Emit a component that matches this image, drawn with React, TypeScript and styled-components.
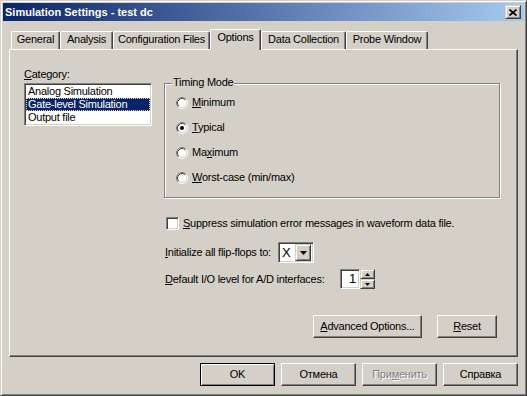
import React from "react";
import styled, { createGlobalStyle, css } from "styled-components";

const FACE = "#d4d0c8";
const SHADOW = "#808080";
const DARK = "#404040";
const HI = "#ffffff";
const NAVY = "#0a246a";
const FONT = `"Liberation Sans", Arial, sans-serif`;

const Global = createGlobalStyle`
  html, body { margin: 0; padding: 0; background: ${FACE}; }
  body { font-family: ${FONT}; font-size: 11px; color: #000; }
  * { box-sizing: border-box; }
  u { text-underline-offset: 1px; }
`;

const Window = styled.div`
  width: 527px;
  height: 396px;
  background: ${FACE};
  border: 1px solid;
  border-color: ${FACE} ${DARK} ${DARK} ${FACE};
  box-shadow: inset 1px 1px ${HI}, inset -1px -1px ${SHADOW};
  padding: 2px;
  display: flex;
  flex-direction: column;
  letter-spacing: -0.25px;
`;

const TitleBar = styled.div`
  height: 18px;
  flex: none;
  background: linear-gradient(to right, #0a246a, #a6caf0);
  display: flex;
  align-items: center;
  padding: 0 3px 0 2px;
`;

const TitleText = styled.span`
  color: #fff;
  font-weight: bold;
  font-size: 11px;
  line-height: 13px;
  letter-spacing: 0;
  white-space: nowrap;
`;

const CloseButton = styled.div`
  margin-left: auto;
  width: 16px;
  height: 14px;
  background: ${FACE};
  border: 1px solid;
  border-color: ${FACE} ${DARK} ${DARK} ${FACE};
  box-shadow: inset 1px 1px ${HI}, inset -1px -1px ${SHADOW};
  display: flex;
  align-items: center;
  justify-content: center;
`;

const Body = styled.div`
  padding: 0 6px;
  display: flex;
  flex-direction: column;
`;

const TabRow = styled.div`
  margin-top: 8px;
  height: 20px;
  display: flex;
  align-items: flex-end;
  padding-left: 2px;
`;

const Tab = styled.div<{ $w: number; $active?: boolean }>`
  width: ${(p) => p.$w}px;
  height: ${(p) => (p.$active ? 21 : 18)}px;
  margin-bottom: ${(p) => (p.$active ? -1 : 0)}px;
  background: ${FACE};
  border-top: 1px solid ${HI};
  border-left: 1px solid ${HI};
  border-right: 1px solid ${DARK};
  border-radius: 2px 2px 0 0;
  box-shadow: inset -1px 0 ${SHADOW};
  display: flex;
  justify-content: center;
  padding-top: 1px;
  line-height: 13px;
  white-space: nowrap;
  position: relative;
  z-index: ${(p) => (p.$active ? 2 : 1)};
`;

const Panel = styled.div`
  height: 308px;
  flex: none;
  border: 1px solid;
  border-color: ${HI} ${DARK} ${DARK} ${HI};
  box-shadow: inset -1px -1px ${SHADOW};
  padding: 18px 0 0 14px;
  display: grid;
  grid-template-columns: 128px 336px;
  column-gap: 12px;
  align-items: start;
`;

const Column = styled.div`
  display: flex;
  flex-direction: column;
`;

const Label = styled.div`
  line-height: 13px;
  white-space: nowrap;
`;

const sunken = css`
  border: 1px solid;
  border-color: ${SHADOW} ${HI} ${HI} ${SHADOW};
  box-shadow: inset 1px 1px ${DARK}, inset -1px -1px ${FACE};
  background: #fff;
`;

const raised = css`
  background: ${FACE};
  border: 1px solid;
  border-color: ${FACE} ${DARK} ${DARK} ${FACE};
  box-shadow: inset 1px 1px ${HI}, inset -1px -1px ${SHADOW};
`;

const ListBox = styled.div`
  ${sunken};
  margin-top: 2px;
  width: 128px;
  height: 43px;
  padding: 1px;
  display: flex;
  flex-direction: column;
`;

const ListItem = styled.div<{ $selected?: boolean }>`
  height: 13px;
  line-height: 11px;
  padding-left: 1px;
  white-space: nowrap;
  border: 1px solid transparent;
  ${(p) =>
    p.$selected &&
    css`
      background: ${NAVY};
      color: #fff;
      border: 1px dotted #e8dc9c;
    `}
`;

const GroupBox = styled.div`
  margin-top: 15px;
  width: 336px;
  position: relative;
  border: 1px solid ${SHADOW};
  box-shadow: inset 1px 1px ${HI}, 1px 1px ${HI};
  padding: 6px 0 7px 11px;
  display: flex;
  flex-direction: column;
`;

const Legend = styled.span`
  position: absolute;
  top: -8px;
  left: 7px;
  padding: 0 1px;
  background: ${FACE};
  line-height: 13px;
`;

const OptionRow = styled.div`
  height: 25px;
  display: flex;
  align-items: center;
  gap: 4px;
  line-height: 13px;
`;

const CheckRow = styled.div`
  margin-top: 19px;
  height: 13px;
  padding-left: 2px;
  display: flex;
  align-items: center;
  gap: 4px;
  line-height: 13px;
  white-space: nowrap;
`;

const CheckBox = styled.div`
  ${sunken};
  width: 13px;
  height: 13px;
  flex: none;
`;

const FieldRow = styled.div<{ $mt: number; $h: number }>`
  margin-top: ${(p) => p.$mt}px;
  height: ${(p) => p.$h}px;
  padding-left: 1px;
  display: flex;
  align-items: center;
`;

const FieldLabel = styled.div<{ $w: number }>`
  width: ${(p) => p.$w}px;
  line-height: 13px;
  white-space: nowrap;
`;

const Combo = styled.div`
  ${sunken};
  width: 36px;
  height: 21px;
  padding: 2px;
  display: flex;
  align-items: center;
`;

const ComboText = styled.div`
  flex: 1;
  padding-left: 1px;
  font-size: 13px;
  line-height: 15px;
`;

const DropButton = styled.div`
  ${raised};
  width: 16px;
  height: 17px;
  display: flex;
  align-items: center;
  justify-content: center;
`;

const Edit = styled.div`
  ${sunken};
  width: 20px;
  height: 20px;
  padding-right: 3px;
  text-align: right;
  font-size: 13px;
  line-height: 18px;
`;

const Spinner = styled.div`
  width: 15px;
  height: 20px;
  display: flex;
  flex-direction: column;
`;

const SpinButton = styled.div`
  ${raised};
  flex: 1;
  display: flex;
  align-items: center;
  justify-content: center;
`;

const ButtonRow = styled.div<{ $gap: number; $pr: number; $mt: number }>`
  margin-top: ${(p) => p.$mt}px;
  display: flex;
  justify-content: flex-end;
  gap: ${(p) => p.$gap}px;
  padding-right: ${(p) => p.$pr}px;
`;

const Button = styled.div<{ $w: number; $default?: boolean; $disabled?: boolean }>`
  width: ${(p) => p.$w}px;
  height: 23px;
  background: ${FACE};
  border: 1px solid;
  display: flex;
  align-items: center;
  justify-content: center;
  line-height: 13px;
  white-space: nowrap;
  ${(p) =>
    p.$default
      ? css`
          border-color: #000;
          box-shadow: inset 1px 1px ${HI}, inset -1px -1px ${SHADOW};
        `
      : css`
          border-color: ${HI} ${DARK} ${DARK} ${HI};
          box-shadow: inset -1px -1px ${SHADOW};
        `}
  ${(p) =>
    p.$disabled &&
    css`
      color: ${SHADOW};
      text-shadow: 1px 1px #fff;
    `}
`;

const Radio: React.FC<{ checked?: boolean }> = ({ checked }) => (
  <svg width="12" height="12" viewBox="0 0 12 12" style={{ flex: "none" }}>
    <circle cx="6" cy="6" r="5" fill="#fff" />
    <path d="M2.11 9.89 A5.5 5.5 0 0 1 9.89 2.11" fill="none" stroke={SHADOW} strokeWidth="1" />
    <path d="M9.89 2.11 A5.5 5.5 0 0 1 2.11 9.89" fill="none" stroke={HI} strokeWidth="1" />
    <path d="M2.82 9.18 A4.5 4.5 0 0 1 9.18 2.82" fill="none" stroke={DARK} strokeWidth="1" />
    <path d="M9.18 2.82 A4.5 4.5 0 0 1 2.82 9.18" fill="none" stroke={FACE} strokeWidth="1" />
    {checked && <circle cx="6" cy="6" r="2" fill="#000" />}
  </svg>
);

const DownArrow: React.FC<{ w: number; h: number }> = ({ w, h }) => (
  <svg width={w} height={h} viewBox={`0 0 ${w} ${h}`}>
    <polygon points={`0,0 ${w},0 ${w / 2},${h}`} fill="#000" />
  </svg>
);

const UpArrow: React.FC<{ w: number; h: number }> = ({ w, h }) => (
  <svg width={w} height={h} viewBox={`0 0 ${w} ${h}`}>
    <polygon points={`0,${h} ${w},${h} ${w / 2},0`} fill="#000" />
  </svg>
);

const tabs = [
  { label: "General", w: 49 },
  { label: "Analysis", w: 53 },
  { label: "Configuration Files", w: 97 },
  { label: "Options", w: 51, active: true },
  { label: "Data Collection", w: 85 },
  { label: "Probe Window", w: 82 },
];

export default function App() {
  return (
    <>
      <Global />
      <Window>
        <TitleBar>
          <TitleText>Simulation Settings - test dc</TitleText>
          <CloseButton>
            <svg width="8" height="7" viewBox="0 0 8 7">
              <path d="M0.5 0.5 L7.5 6.5 M7.5 0.5 L0.5 6.5" stroke="#000" strokeWidth="1.6" />
            </svg>
          </CloseButton>
        </TitleBar>
        <Body>
          <TabRow>
            {tabs.map((t) => (
              <Tab key={t.label} $w={t.w} $active={t.active}>
                {t.label}
              </Tab>
            ))}
          </TabRow>
          <Panel>
            <Column>
              <Label>
                <u>C</u>ategory:
              </Label>
              <ListBox>
                <ListItem>Analog Simulation</ListItem>
                <ListItem $selected>Gate-level Simulation</ListItem>
                <ListItem>Output file</ListItem>
              </ListBox>
            </Column>
            <Column>
              <GroupBox>
                <Legend>Timing Mode</Legend>
                <OptionRow>
                  <Radio />
                  <span>
                    <u>M</u>inimum
                  </span>
                </OptionRow>
                <OptionRow>
                  <Radio checked />
                  <span>
                    <u>T</u>ypical
                  </span>
                </OptionRow>
                <OptionRow>
                  <Radio />
                  <span>
                    Ma<u>x</u>imum
                  </span>
                </OptionRow>
                <OptionRow>
                  <Radio />
                  <span>
                    <u>W</u>orst-case (min/max)
                  </span>
                </OptionRow>
              </GroupBox>
              <CheckRow>
                <CheckBox />
                <span>
                  <u>S</u>uppress simulation error messages in waveform data file.
                </span>
              </CheckRow>
              <FieldRow $mt={12} $h={21}>
                <FieldLabel $w={113}>
                  <u>I</u>nitialize all flip-flops to:
                </FieldLabel>
                <Combo>
                  <ComboText>X</ComboText>
                  <DropButton>
                    <DownArrow w={7} h={4} />
                  </DropButton>
                </Combo>
              </FieldRow>
              <FieldRow $mt={6} $h={20}>
                <FieldLabel $w={175}>
                  <u>D</u>efault I/O level for A/D interfaces:
                </FieldLabel>
                <Edit>1</Edit>
                <Spinner>
                  <SpinButton>
                    <UpArrow w={5} h={3} />
                  </SpinButton>
                  <SpinButton>
                    <DownArrow w={5} h={3} />
                  </SpinButton>
                </Spinner>
              </FieldRow>
              <ButtonRow $mt={26} $gap={15} $pr={3}>
                <Button $w={109}>
                  <span>
                    <u>A</u>dvanced Options...
                  </span>
                </Button>
                <Button $w={60}>
                  <span>
                    <u>R</u>eset
                  </span>
                </Button>
              </ButtonRow>
            </Column>
          </Panel>
          <ButtonRow $mt={6} $gap={6} $pr={0}>
            <Button $w={75} $default>
              OK
            </Button>
            <Button $w={75}>Отмена</Button>
            <Button $w={75} $disabled>
              <span>
                При<u>м</u>енить
              </span>
            </Button>
            <Button $w={75}>Справка</Button>
          </ButtonRow>
        </Body>
      </Window>
    </>
  );
}
